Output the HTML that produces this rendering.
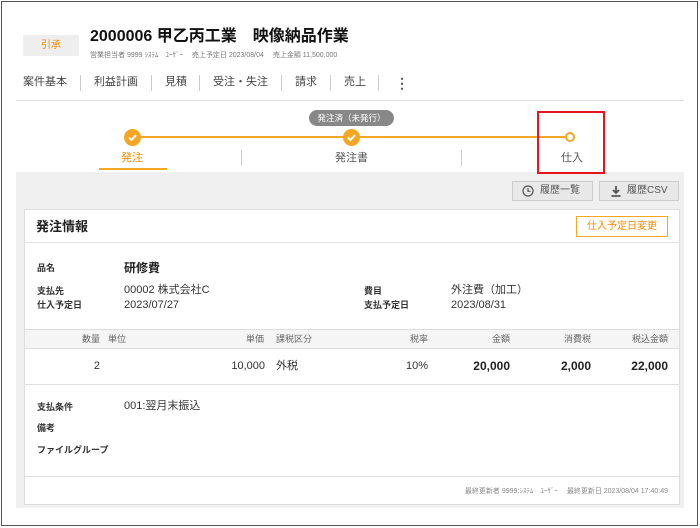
<!DOCTYPE html>
<html><head><meta charset="utf-8"><style>
*{box-sizing:border-box;margin:0;padding:0}
body{width:700px;height:528px;background:#fff;font-family:"Liberation Sans","Noto Sans CJK JP",sans-serif;color:#333;position:relative;overflow:hidden}
.a{position:absolute;white-space:nowrap;line-height:1.2}
.frame{position:absolute;left:1px;top:1px;width:697px;height:525px;border:1px solid #555}
.lbl{font-size:9px;font-weight:bold;color:#333}
.v{font-size:11px;color:#333}
.th{font-size:9px;color:#666}
.sep{position:absolute;width:1px;background:#ccc}
</style></head><body>
<div class="frame"></div>
<div class="a" style="left:23px;top:35px;width:56px;height:21px;background:#eee;color:#f08c00;font-size:10px;text-align:center;line-height:21px">引承</div>
<div class="a" style="left:90px;top:27px;font-size:16px;font-weight:bold;color:#111">2000006 甲乙丙工業　映像納品作業</div>
<div class="a" style="left:90px;top:52px;font-size:7px;color:#777">営業担当者 9999 ｼｽﾃﾑ　ﾕｰｻﾞｰ　 売上予定日 2023/08/04　 売上金額 11,500,000</div>
<div class="a" style="left:23px;top:76px;font-size:11px;color:#444">案件基本</div>
<div class="sep" style="left:80px;top:75px;height:16px"></div>
<div class="a" style="left:94px;top:76px;font-size:11px;color:#444">利益計画</div>
<div class="sep" style="left:151px;top:75px;height:16px"></div>
<div class="a" style="left:165px;top:76px;font-size:11px;color:#444">見積</div>
<div class="sep" style="left:199px;top:75px;height:16px"></div>
<div class="a" style="left:213px;top:76px;font-size:11px;color:#444">受注・失注</div>
<div class="sep" style="left:281px;top:75px;height:16px"></div>
<div class="a" style="left:295px;top:76px;font-size:11px;color:#444">請求</div>
<div class="sep" style="left:330px;top:75px;height:16px"></div>
<div class="a" style="left:344px;top:76px;font-size:11px;color:#444">売上</div>
<div class="sep" style="left:378px;top:75px;height:16px"></div>
<div class="a" style="left:395px;top:75px;font-size:14px;font-weight:bold;color:#555;line-height:16px">⋮</div>
<div class="a" style="left:16px;top:100px;width:668px;height:1px;background:#ddd"></div>
<div class="a" style="left:309px;top:110px;width:85px;height:16px;border-radius:8px;background:#888;color:#fff;font-size:8.5px;text-align:center;line-height:16px">発注済（未発行）</div>
<div class="a" style="left:132px;top:136px;width:438px;height:2px;background:#f5a623"></div>
<div class="a" style="left:124px;top:129px;width:17px;height:17px;border-radius:50%;background:#f5a623"></div>
<svg class="a" style="left:124px;top:129px" width="17" height="17"><path d="M5 8.5l2.5 2.5 4.5-5" stroke="#fff" stroke-width="2" fill="none"/></svg>
<div class="a" style="left:343px;top:129px;width:17px;height:17px;border-radius:50%;background:#f5a623"></div>
<svg class="a" style="left:343px;top:129px" width="17" height="17"><path d="M5 8.5l2.5 2.5 4.5-5" stroke="#fff" stroke-width="2" fill="none"/></svg>
<div class="a" style="left:565px;top:132px;width:10px;height:10px;border-radius:50%;background:#fff;border:2px solid #f5a623"></div>
<div class="a" style="left:121px;top:152px;font-size:11px;color:#f08c00">発注</div>
<div class="a" style="left:99px;top:168px;width:68px;height:2px;background:#f5a623"></div>
<div class="sep" style="left:241px;top:150px;height:16px"></div>
<div class="a" style="left:335px;top:152px;font-size:11px;color:#555">発注書</div>
<div class="sep" style="left:461px;top:150px;height:16px"></div>
<div class="a" style="left:561px;top:152px;font-size:11px;color:#555">仕入</div>
<div class="a" style="left:16px;top:172px;width:668px;height:336px;background:#f0f0f0"></div>
<div class="a" style="left:537px;top:111px;width:68px;height:63px;border:2px solid #e5141f"></div>
<div class="a" style="left:512px;top:181px;width:81px;height:20px;background:#e8e8e8;border:1px solid #ccc;font-size:10px;color:#555;line-height:18px;padding-left:27px">履歴一覧</div>
<svg class="a" style="left:522px;top:185px" width="12" height="12"><circle cx="6" cy="6" r="5" stroke="#555" stroke-width="1.2" fill="none"/><path d="M6 3v3.3h2.5" stroke="#555" stroke-width="1.2" fill="none"/></svg>
<div class="a" style="left:599px;top:181px;width:80px;height:20px;background:#e8e8e8;border:1px solid #ccc;font-size:10px;color:#555;line-height:18px;padding-left:27px">履歴CSV</div>
<svg class="a" style="left:610px;top:185px" width="12" height="12"><path d="M6 1v7M3 5l3 3 3-3M1.5 11h9" stroke="#555" stroke-width="1.8" fill="none"/></svg>
<div class="a" style="left:24px;top:209px;width:656px;height:296px;background:#fff;border:1px solid #ddd"></div>
<div class="a" style="left:24px;top:242px;width:656px;height:1px;background:#ddd"></div>
<div class="a" style="left:36px;top:219px;font-size:13px;font-weight:bold;color:#222">発注情報</div>
<div class="a" style="left:576px;top:216px;width:92px;height:21px;border:1px solid #f5a623;color:#f08c00;font-size:10px;text-align:center;line-height:19px">仕入予定日変更</div>
<div class="a lbl" style="left:37px;top:263px">品名</div>
<div class="a" style="left:124px;top:261px;font-size:12px;font-weight:bold;color:#222">研修費</div>
<div class="a lbl" style="left:37px;top:286px">支払先</div>
<div class="a v" style="left:124px;top:284px">00002 株式会社C</div>
<div class="a lbl" style="left:37px;top:300px">仕入予定日</div>
<div class="a v" style="left:124px;top:299px">2023/07/27</div>
<div class="a lbl" style="left:364px;top:286px">費目</div>
<div class="a v" style="left:451px;top:284px">外注費（加工）</div>
<div class="a lbl" style="left:364px;top:300px">支払予定日</div>
<div class="a v" style="left:451px;top:299px">2023/08/31</div>
<div class="a" style="left:25px;top:329px;width:654px;height:20px;background:#f5f5f5;border-top:1px solid #ddd;border-bottom:1px solid #ddd"></div>
<div class="a th" style="right:600px;top:334px">数量</div>
<div class="a th" style="left:108px;top:334px">単位</div>
<div class="a th" style="right:436px;top:334px">単価</div>
<div class="a th" style="left:276px;top:334px">課税区分</div>
<div class="a th" style="right:272px;top:334px">税率</div>
<div class="a th" style="right:190px;top:334px">金額</div>
<div class="a th" style="right:109px;top:334px">消費税</div>
<div class="a th" style="right:32px;top:334px">税込金額</div>
<div class="a v" style="right:600px;top:360px">2</div>
<div class="a v" style="right:435px;top:360px">10,000</div>
<div class="a v" style="left:276px;top:360px">外税</div>
<div class="a v" style="right:272px;top:360px">10%</div>
<div class="a" style="right:190px;top:359px;font-size:12px;font-weight:bold;color:#222">20,000</div>
<div class="a" style="right:109px;top:359px;font-size:12px;font-weight:bold;color:#222">2,000</div>
<div class="a" style="right:32px;top:359px;font-size:12px;font-weight:bold;color:#222">22,000</div>
<div class="a" style="left:24px;top:384px;width:656px;height:1px;background:#ddd"></div>
<div class="a lbl" style="left:37px;top:402px">支払条件</div>
<div class="a v" style="left:124px;top:400px">001:翌月末振込</div>
<div class="a lbl" style="left:37px;top:423px">備考</div>
<div class="a lbl" style="left:37px;top:445px">ファイルグループ</div>
<div class="a" style="left:24px;top:476px;width:656px;height:1px;background:#ddd"></div>
<div class="a" style="right:32px;top:488px;font-size:7px;color:#888">最終更新者 9999:ｼｽﾃﾑ　ﾕｰｻﾞｰ　 最終更新日 2023/08/04 17:40:49</div>
</body></html>
